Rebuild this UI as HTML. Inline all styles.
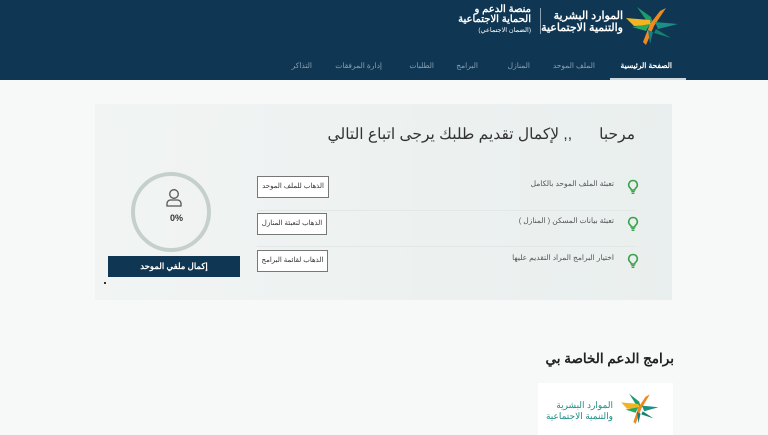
<!DOCTYPE html>
<html><head><meta charset="utf-8"><style>
*{margin:0;padding:0;box-sizing:border-box}
body{width:768px;height:435px;overflow:hidden;background:#f7f8f8;font-family:"Liberation Sans","Noto Sans CJK SC",sans-serif;position:relative}
.hdr{position:absolute;left:0;top:0;width:768px;height:80px;background:#0f3652}
.t{position:absolute;white-space:nowrap;direction:rtl}
.nav{position:absolute;top:61px;font-size:7.5px;color:#8aa0b2}
.card{position:absolute;left:95px;top:104px;width:577px;height:196px;background:linear-gradient(90deg,#f1f4f3,#e9efee);}
.btn{position:absolute;height:22px;border:1px solid #777;background:#fff;font-size:7px;color:#333;text-align:center;line-height:20px;direction:rtl}
.item{position:absolute;font-size:7.5px;color:#555;direction:rtl;white-space:nowrap}
.line{position:absolute;height:1px;background:#e2e8e6}
</style></head><body>
<div class="hdr">
<svg style="position:absolute;left:620px;top:0" width="70" height="55" viewBox="0 0 70 55">
<polygon points="17,7 31,17 33,23 26,20" fill="#1f9a6a"/>
<polygon points="6,18 30,20 31,25 14,26" fill="#f2b51f"/>
<polygon points="12,27 30,24 26,31" fill="#29a85f"/>
<polygon points="46,8 34,26 26,45 23,42 30,24 40,11" fill="#ee8a1e"/>
<polygon points="35,22 58,24 38,29" fill="#1b8f84"/>
<polygon points="36,29 51,38 34,33" fill="#17806f"/>
<polygon points="28,30 33,32 30,44" fill="#1a7d88"/>
</svg>
<div class="t" style="right:145px;top:10px;font-size:11px;color:#fff;line-height:12px;text-align:right;font-weight:bold">الموارد البشرية<br>والتنمية الاجتماعية</div>
<div style="position:absolute;left:540px;top:8px;width:1px;height:26px;background:#8ea3b3"></div>
<div class="t" style="right:237px;top:5px;font-size:10px;color:#fff;line-height:10px;text-align:right;font-weight:bold">منصة الدعم و<br>الحماية الاجتماعية</div>
<div class="t" style="right:237px;top:26px;font-size:6.5px;color:#fff">(الضمان الاجتماعي)</div>
<div class="nav t" style="right:96px;color:#fff;font-weight:bold">الصفحة الرئيسية</div>
<div style="position:absolute;left:610px;top:78px;width:76px;height:2px;background:#cfd8dd"></div>
<div class="nav t" style="right:173px">الملف الموحد</div>
<div class="nav t" style="right:238px">المنازل</div>
<div class="nav t" style="right:290px">البرامج</div>
<div class="nav t" style="right:334px">الطلبات</div>
<div class="nav t" style="right:386px">إدارة المرفقات</div>
<div class="nav t" style="right:456px">التذاكر</div>
</div>
<div class="card">
<div class="t" style="right:37px;top:21px;font-size:15.5px;color:#333">مرحبا</div>
<div class="t" style="right:100px;top:21px;font-size:15.5px;color:#333">,, لإكمال تقديم طلبك يرجى اتباع التالي</div>
<div class="item" style="right:58px;top:75px">تعبئة الملف الموحد بالكامل</div>
<div class="item" style="right:58px;top:112px">تعبئة بيانات المسكن ( المنازل )</div>
<div class="item" style="right:58px;top:149px">اختيار البرامج المراد التقديم عليها</div>
<div class="line" style="left:162px;top:106px;width:380px"></div>
<div class="line" style="left:162px;top:142px;width:380px"></div>
<svg style="position:absolute;left:532px;top:75px" width="12" height="16" viewBox="0 0 12 16"><path d="M6 1.5a4.3 4.3 0 0 0-2.6 7.7c.6.5.9 1 .9 1.8h3.4c0-.8.3-1.3.9-1.8A4.3 4.3 0 0 0 6 1.5z" fill="none" stroke="#3aa04a" stroke-width="1.6"/><path d="M4.3 12.5h3.4M4.6 14.3h2.8" stroke="#3aa04a" stroke-width="1.3"/></svg>
<svg style="position:absolute;left:532px;top:112px" width="12" height="16" viewBox="0 0 12 16"><path d="M6 1.5a4.3 4.3 0 0 0-2.6 7.7c.6.5.9 1 .9 1.8h3.4c0-.8.3-1.3.9-1.8A4.3 4.3 0 0 0 6 1.5z" fill="none" stroke="#3aa04a" stroke-width="1.6"/><path d="M4.3 12.5h3.4M4.6 14.3h2.8" stroke="#3aa04a" stroke-width="1.3"/></svg>
<svg style="position:absolute;left:532px;top:149px" width="12" height="16" viewBox="0 0 12 16"><path d="M6 1.5a4.3 4.3 0 0 0-2.6 7.7c.6.5.9 1 .9 1.8h3.4c0-.8.3-1.3.9-1.8A4.3 4.3 0 0 0 6 1.5z" fill="none" stroke="#3aa04a" stroke-width="1.6"/><path d="M4.3 12.5h3.4M4.6 14.3h2.8" stroke="#3aa04a" stroke-width="1.3"/></svg>
<div class="btn" style="left:162px;top:72px;width:72px">الذهاب للملف الموحد</div>
<div class="btn" style="left:162px;top:109px;width:70px">الذهاب لتعبئة المنازل</div>
<div class="btn" style="left:162px;top:146px;width:71px">الذهاب لقائمة البرامج</div>
<div style="position:absolute;left:36px;top:68px;width:80px;height:80px;border:4px solid #c5d0cd;border-radius:50%"></div>
<svg style="position:absolute;left:70px;top:84px" width="18" height="20" viewBox="0 0 18 20"><circle cx="9" cy="6" r="4.3" fill="none" stroke="#555" stroke-width="1.3"/><path d="M2 18v-2.5a3.5 3.5 0 0 1 3.5-3.5h7a3.5 3.5 0 0 1 3.5 3.5V18z" fill="none" stroke="#555" stroke-width="1.3"/></svg>
<div class="t" style="left:75px;top:109px;font-size:9px;color:#333;direction:ltr;font-weight:bold">0%</div>
<div style="position:absolute;left:13px;top:152px;width:132px;height:21px;background:#0f3652;color:#fff;font-size:8.5px;text-align:center;line-height:21px;direction:rtl;font-weight:bold">إكمال ملفي الموحد</div>
<div style="position:absolute;left:9px;top:178px;width:2px;height:2px;background:#333"></div>
</div>
<div class="t" style="right:94px;top:351px;font-size:13.5px;color:#222;font-weight:bold">برامج الدعم الخاصة بي</div>
<div style="position:absolute;left:538px;top:383px;width:135px;height:52px;background:#fff"></div>
<svg style="position:absolute;left:617px;top:388px" width="50" height="44" viewBox="0 0 70 55" preserveAspectRatio="none">
<polygon points="17,7 31,17 33,23 26,20" fill="#1f9a6a"/>
<polygon points="6,18 30,20 31,25 14,26" fill="#f2b51f"/>
<polygon points="12,27 30,24 26,31" fill="#29a85f"/>
<polygon points="46,8 34,26 26,45 23,42 30,24 40,11" fill="#ee8a1e"/>
<polygon points="35,22 58,24 38,29" fill="#1b8f84"/>
<polygon points="36,29 51,38 34,33" fill="#17806f"/>
<polygon points="28,30 33,32 30,44" fill="#1a7d88"/>
</svg>
<div class="t" style="right:155px;top:400px;font-size:9px;color:#1b8a82;line-height:11px;text-align:right">الموارد البشرية<br>والتنمية الاجتماعية</div>
</body></html>
